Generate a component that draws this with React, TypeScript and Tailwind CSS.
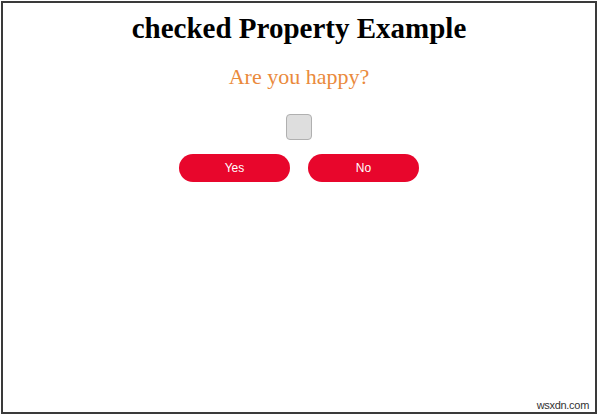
export default function App() {
  return (
    <div className="w-[600px] h-[417px] bg-white p-px">
      <div className="relative h-[413px] w-[596px] border-2 border-[#3a3a3a] bg-white">
        <div className="flex flex-col items-center">
          <h1 className="mt-[8px] text-[29px] font-bold leading-[34px] text-black" style={{ fontFamily: '"Liberation Serif", serif' }}>
            checked Property Example
          </h1>
          <p className="mt-[19px] text-[22px] leading-[26px] text-[#ea8a3c]" style={{ fontFamily: '"Liberation Serif", serif' }}>
            Are you happy?
          </p>
          <div className="mt-[24px] h-[26px] w-[26px] rounded-[4px] border border-[#b0b0b0] bg-[#dedede]" />
          <div className="mt-[14px] flex gap-[18px]">
            <button className="h-[28px] w-[111px] rounded-full bg-[#e8062c] text-[12px] text-white" style={{ fontFamily: '"Liberation Sans", sans-serif' }}>
              Yes
            </button>
            <button className="h-[28px] w-[111px] rounded-full bg-[#e8062c] text-[12px] text-white" style={{ fontFamily: '"Liberation Sans", sans-serif' }}>
              No
            </button>
          </div>
        </div>
        <span className="absolute bottom-[1px] right-[6px] text-[11px] leading-[12px] tracking-[-0.3px] text-[#333]" style={{ fontFamily: '"Liberation Sans", sans-serif' }}>
          wsxdn.com
        </span>
      </div>
    </div>
  );
}
